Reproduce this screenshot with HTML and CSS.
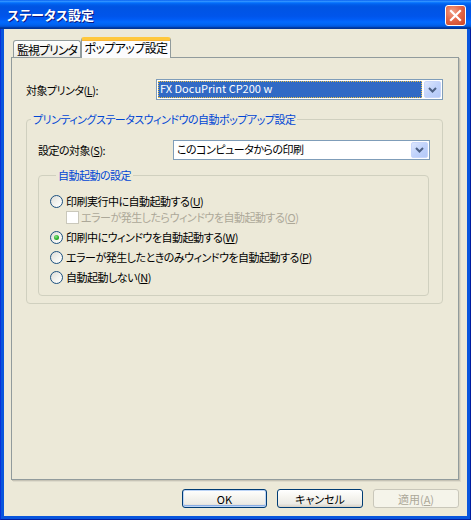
FILE: index.html
```html
<!DOCTYPE html>
<html lang="ja">
<head>
<meta charset="utf-8">
<title>ステータス設定</title>
<link rel="stylesheet" href="styles.css">
</head>
<body>
<div class="window">
  <div class="titlebar">
    <span class="title">ステータス設定</span>
    <span class="close">
      <svg width="21" height="21" viewBox="0 0 21 21">
        <path d="M6 6 L15 15 M15 6 L6 15" stroke="#fff" stroke-width="2.2" stroke-linecap="square"/>
      </svg>
    </span>
  </div>
  <div class="frame">
    <div class="client">
      <div class="tabs">
        <div class="tab">監視プリンタ</div>
        <div class="tab active">ポップアップ設定</div>
      </div>
      <div class="panel">
        <div class="row printer-row">
          <span class="label printer-label">対象プリンタ(<u>L</u>):</span>
          <div class="combo printer-combo">
            <span class="value selected">FX DocuPrint CP200 w</span>
            <span class="ddbtn"><svg width="9" height="6" viewBox="0 0 9 6"><path d="M1 1 L4.5 4.5 L8 1" fill="none" stroke="#4D6185" stroke-width="2"/></svg></span>
          </div>
        </div>
        <fieldset class="group outer">
          <legend>プリンティングステータスウィンドウの自動ポップアップ設定</legend>
          <div class="row target-row">
            <span class="label target-label">設定の対象(<u>S</u>):</span>
            <div class="combo target-combo">
              <span class="value">このコンピュータからの印刷</span>
              <span class="ddbtn"><svg width="9" height="6" viewBox="0 0 9 6"><path d="M1 1 L4.5 4.5 L8 1" fill="none" stroke="#4D6185" stroke-width="2"/></svg></span>
            </div>
          </div>
          <fieldset class="group inner">
            <legend>自動起動の設定</legend>
            <div class="opt">
              <span class="radio"></span>
              <span>印刷実行中に自動起動する(<u>U</u>)</span>
            </div>
            <div class="opt sub disabled">
              <span class="check"></span>
              <span>エラーが発生したらウィンドウを自動起動する(<u>O</u>)</span>
            </div>
            <div class="opt">
              <span class="radio on"></span>
              <span>印刷中にウィンドウを自動起動する(<u>W</u>)</span>
            </div>
            <div class="opt">
              <span class="radio"></span>
              <span>エラーが発生したときのみウィンドウを自動起動する(<u>P</u>)</span>
            </div>
            <div class="opt">
              <span class="radio"></span>
              <span>自動起動しない(<u>N</u>)</span>
            </div>
          </fieldset>
        </fieldset>
      </div>
      <div class="buttons">
        <button class="btn default">OK</button>
        <button class="btn">キャンセル</button>
        <button class="btn" disabled>適用(<u>A</u>)</button>
      </div>
    </div>
  </div>
</div>
</body>
</html>
```
FILE: styles.css
```css
* { box-sizing: border-box; }
html, body { margin: 0; padding: 0; background: #fff; }
body {
  font-family: "Noto Sans CJK JP", "Noto Sans", sans-serif;
  font-size: 11px;
  font-weight: 400;
  line-height: 14px;
  letter-spacing: -0.5px;
  font-feature-settings: "palt";
  color: #000;
}
u { text-decoration: underline; text-underline-offset: 1px; }

.window {
  width: 471px;
  height: 520px;
  display: flex;
  flex-direction: column;
}

.titlebar {
  height: 29px;
  flex: none;
  display: flex;
  align-items: center;
  padding: 0 5px 0 7px;
  background: linear-gradient(to bottom, #0058EE 0%, #3593FF 4%, #288EFF 6%, #127DFF 8%, #036FFC 10%, #0262EE 14%, #0057E5 20%, #0054E3 24%, #0055EB 56%, #005BF5 66%, #026AFE 76%, #0062EF 86%, #0052D6 92%, #0040AB 94%, #003092 100%);
}
.title {
  flex: 1;
  color: #fff;
  font-weight: bold;
  font-size: 13px;
  letter-spacing: 0;
  text-shadow: 1px 1px 0 #0A1883;
  padding-top: 1px;
}
.close {
  width: 21px;
  height: 21px;
  border: 1px solid #fff;
  border-radius: 3px;
  background: radial-gradient(circle at 35% 30%, #F0A188 0%, #E4684A 45%, #CC4425 100%);
  display: flex;
  align-items: center;
  justify-content: center;
  margin-top: 1px;
}
.close svg { display: block; margin: -1px; }

.frame {
  flex: 1;
  display: flex;
  background: #0855DD;
  border-left: 1px solid #0831D9;
  border-right: 1px solid #001EA0;
  border-bottom: 1px solid #001EA0;
  padding: 0 3px 3px;
}
.client {
  flex: 1;
  background: #ECE9D8;
  padding: 8px 0 0 7px;
  display: flex;
  flex-direction: column;
}

.tabs {
  display: flex;
  align-items: flex-end;
  height: 20px;
  padding-left: 2px;
  position: relative;
  z-index: 1;
}
.tab {
  width: 68px;
  height: 17px;
  border: 1px solid #919B9C;
  border-bottom: none;
  border-radius: 3px 3px 0 0;
  background: linear-gradient(to bottom, #FFFFFF 0%, #F7F7F3 40%, #ECEBE6 100%);
  text-align: center;
  font-size: 12px;
  letter-spacing: -1px;
  line-height: 15px;
  padding-top: 1px;
  white-space: nowrap;
}
.tab.active {
  width: 90px;
  height: 21px;
  margin-bottom: -1px;
  background: #FCFCFE;
  border-top: 3px solid #FFC83C;
  box-shadow: inset 0 1px 0 #F8B43A;
  letter-spacing: -0.6px;
  line-height: 15px;
  padding-top: 0;
}

.panel {
  width: 448px;
  height: 423px;
  border: 1px solid #919B9C;
  box-shadow: 1px 1px 0 #C6C3B5, 2px 2px 0 #DEDBCC;
  background: #ECE9D8;
  padding: 21px 0 0 14px;
}

.row { display: flex; align-items: center; }
.printer-label { width: 130px; }
.target-label { width: 135px; }

.combo {
  display: flex;
  align-items: stretch;
  height: 21px;
  border: 1px solid #7F9DB9;
  background: #fff;
  padding: 1px;
}
.printer-combo { width: 287px; }
.target-combo { width: 257px; height: 20px; }
.combo .value {
  flex: 1;
  padding-left: 2px;
  margin-right: 2px;
  line-height: 15px;
  white-space: nowrap;
  overflow: hidden;
}
.combo .value.selected {
  background: #316AC5;
  color: #fff;
  letter-spacing: 0;
  outline: 1px dotted #E8C048;
  outline-offset: -1px;
}
.ddbtn {
  width: 17px;
  border: 1px solid #C8D6FB;
  border-radius: 2px;
  background: linear-gradient(135deg, #DCE6FD 0%, #C1D3FB 50%, #B4C9F8 100%);
  display: flex;
  align-items: center;
  justify-content: center;
}
.ddbtn svg { display: block; }

.group {
  margin: 0;
  border: 1px solid #D0D0BF;
  border-radius: 4px;
  padding: 0;
  min-width: 0;
}
.group legend {
  color: #0046D5;
  padding: 0 2px;
  line-height: 14px;
}
.outer {
  width: 417px;
  margin-top: 12px;
  padding: 0 0 7px 0;
}
.outer > legend { margin-left: 4px; }
.target-row { margin-top: 14px; padding-left: 11px; }
.inner {
  width: 391px;
  margin: 8px 0 0 11px;
  padding: 11px 0 10px 11px;
}
.inner > legend { margin-left: 6px; }

.opt {
  display: flex;
  align-items: center;
  height: 16px;
  gap: 3px;
  margin-top: 4px;
}
.opt:first-of-type { margin-top: 0; }
.opt.sub { margin-top: 0; padding-left: 16px; gap: 2px; }
.opt.disabled { color: #ACA899; }

.radio {
  width: 13px;
  height: 13px;
  border-radius: 50%;
  border: 1px solid #1C5180;
  background: linear-gradient(135deg, #DCDCD7 0%, #F3F3EF 55%, #FFFFFF 100%);
  display: flex;
  align-items: center;
  justify-content: center;
  flex: none;
}
.radio.on::after {
  content: "";
  width: 5px;
  height: 5px;
  border-radius: 50%;
  background: radial-gradient(circle at 40% 35%, #89E28A 0%, #2BB12B 55%, #158A15 100%);
}
.check {
  width: 13px;
  height: 13px;
  border: 1px solid #CAC8BB;
  background: #fff;
  flex: none;
}

.buttons {
  display: flex;
  justify-content: flex-end;
  gap: 10px;
  margin-top: 9px;
  padding-right: 8px;
}
.btn {
  width: 86px;
  height: 19px;
  font: inherit;
  letter-spacing: 0;
  line-height: 14px;
  padding: 0;
  color: #000;
  border: 1px solid #003C74;
  border-radius: 3px;
  background: linear-gradient(to bottom, #FFFFFF 0%, #F6F5F0 40%, #ECEBE6 80%, #D6D0C5 100%);
}
.btn.default {
  width: 85px;
  box-shadow: inset 0 0 0 1px #BCD4F6, inset 0 -1px 0 1px #89ADE4;
}
.btn:disabled {
  color: #ACA899;
  border-color: #C9C7BA;
  background: #F5F4EA;
}
```
